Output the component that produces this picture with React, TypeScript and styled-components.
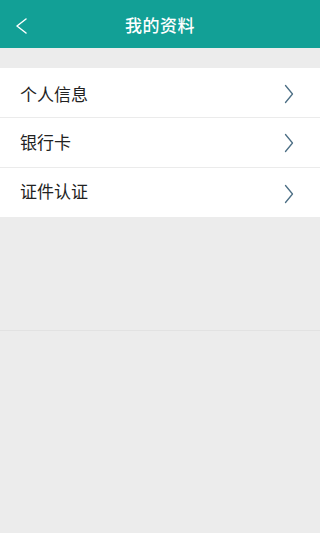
import styled, { createGlobalStyle } from "styled-components";

const Global = createGlobalStyle`
  html, body {
    margin: 0;
    padding: 0;
    background: #ececec;
  }
  body {
    font-family: "Noto Sans CJK SC", "Liberation Sans", sans-serif;
  }
`;

const Page = styled.div`
  display: flex;
  flex-direction: column;
  width: 320px;
  min-height: 533px;
  background: #ececec;
`;

const Header = styled.header`
  display: flex;
  align-items: center;
  justify-content: center;
  position: relative;
  height: 48px;
  background: #12a096;
  color: #fff;
`;

const BackButton = styled.button`
  position: absolute;
  left: 14px;
  top: 17px;
  width: 14px;
  height: 18px;
  padding: 0;
  border: none;
  background: none;
  display: flex;
  align-items: center;
  justify-content: center;
`;

const Title = styled.h1`
  margin: 0;
  font-size: 17px;
  font-weight: 500;
  letter-spacing: 0.5px;
`;

const List = styled.ul`
  list-style: none;
  margin: 20px 0 0;
  padding: 0;
  background: #fff;
`;

const Row = styled.li`
  display: flex;
  align-items: center;
  justify-content: space-between;
  height: 49px;
  padding: 0 26px 0 20px;
  border-bottom: 1px solid #ebebeb;
  font-size: 17px;
  color: #222;

  &:last-child {
    border-bottom: none;
  }
`;

const Label = styled.span<{ $shift: number }>`
  position: relative;
  top: ${(p) => p.$shift}px;
`;

const Chevron = styled.svg<{ $shift: number }>`
  position: relative;
  top: ${(p) => p.$shift}px;
`;

const Rule = styled.div`
  margin-top: 113px;
  height: 1px;
  background: #e2e2e2;
`;

const items = [
  { label: "个人信息", text: 1, arrow: 1 },
  { label: "银行卡", text: -1, arrow: 0 },
  { label: "证件认证", text: -2, arrow: 1 },
];

export default function App() {
  return (
    <Page>
      <Global />
      <Header>
        <BackButton aria-label="返回">
          <svg width="12" height="16" viewBox="0 0 12 16">
            <path d="M11 1 L2 8 L11 15" fill="none" stroke="#fff" strokeWidth="1.5" strokeLinecap="round" strokeLinejoin="round" />
          </svg>
        </BackButton>
        <Title>我的资料</Title>
      </Header>
      <List>
        {items.map((it) => (
          <Row key={it.label}>
            <Label $shift={it.text}>{it.label}</Label>
            <Chevron $shift={it.arrow} width="10" height="20" viewBox="0 0 10 20">
              <path d="M1.5 1.5 L8.5 10 L1.5 18.5" fill="none" stroke="#4d6f85" strokeWidth="1.3" strokeLinecap="round" strokeLinejoin="round" />
            </Chevron>
          </Row>
        ))}
      </List>
      <Rule />
    </Page>
  );
}
